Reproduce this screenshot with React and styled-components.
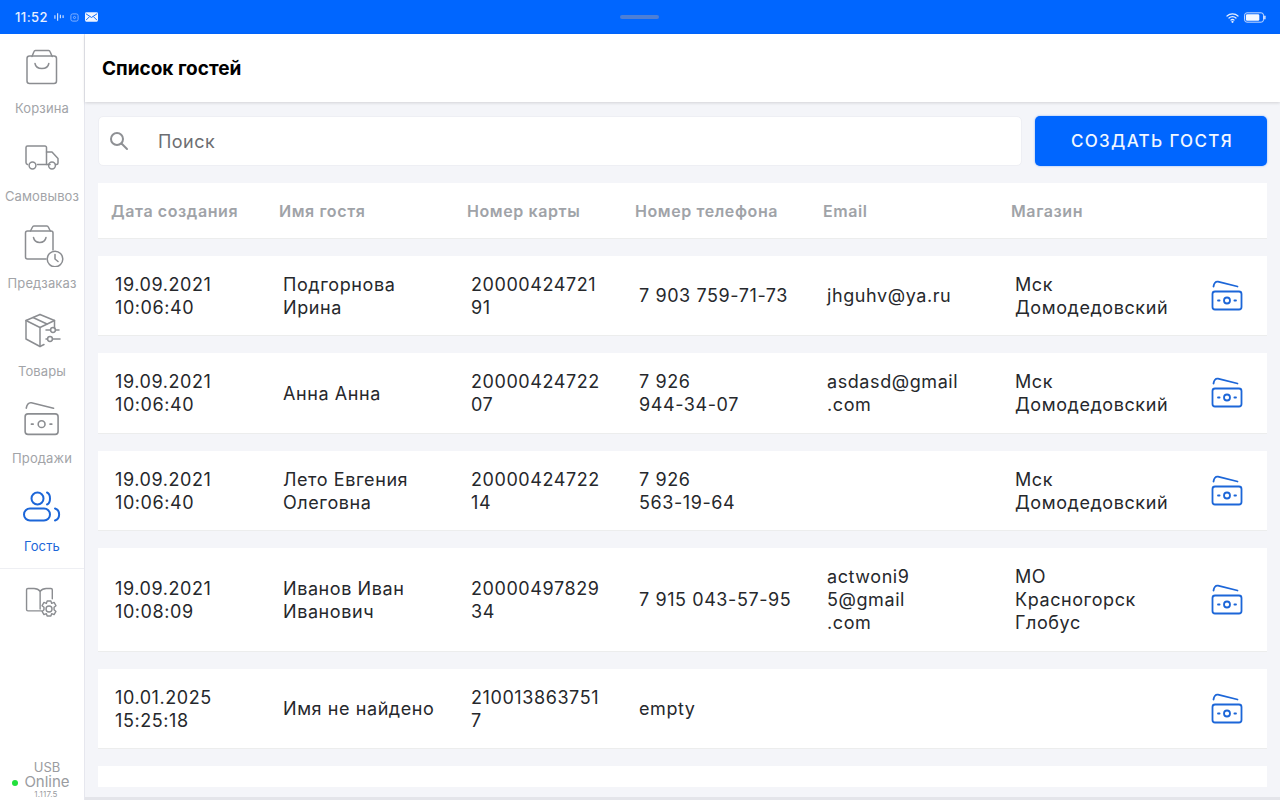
import React from 'react';
import styled, { createGlobalStyle } from 'styled-components';

const Global = createGlobalStyle`
  html, body { margin: 0; padding: 0; height: 100%; overflow: hidden; }
  body { font-family: Inter, "Noto Sans", sans-serif; background: #f4f5f9; }
  #root { height: 100%; }
  * { box-sizing: border-box; }
`;

const Page = styled.div`
  width: 1280px; height: 800px; display: flex; flex-direction: column; overflow: hidden;
`;
const StatusBar = styled.div`
  height: 34px; flex: none; background: #0066ff; color: #e8f0ff; display: grid;
  grid-template-columns: 1fr 40px 1fr; align-items: center; padding: 0 14px 0 15px;
`;
const StatusLeft = styled.div`
  display: flex; align-items: center; gap: 6px; font-size: 13px; font-weight: 500; letter-spacing: 0.45px;
`;
const StatusRight = styled.div`
  display: flex; align-items: center; justify-content: flex-end; gap: 4px;
`;
const Handle = styled.div`
  width: 39px; height: 4px; border-radius: 2px; background: #4d7fd6; margin-top: -1px; margin-left: -1px;
`;
const Body = styled.div`
  flex: 1; display: flex; min-height: 0;
`;
const Sidebar = styled.aside`
  width: 85px; flex: none; background: #fff; border-right: 1px solid #e6e7ee; display: flex; flex-direction: column;
`;
const NavItem = styled.div`
  height: 87.5px; flex: none; display: flex; flex-direction: column; align-items: center; padding-top: 14px;
  color: ${p => (p.$active ? '#1c66d8' : '#a2a4a8')};
`;
const NavIcon = styled.svg`
  width: 44px; height: 44px; flex: none; display: block;
  fill: none; stroke: ${p => (p.$active ? '#1c66d8' : '#8b8d91')}; stroke-width: ${p => p.$stroke || 1.5}; stroke-linecap: round; stroke-linejoin: round;
`;
const NavLabel = styled.div`
  font-size: 13px; line-height: 16px; margin-top: 8px; letter-spacing: 0.12px; white-space: nowrap;
`;
const Divider = styled.div`
  height: 1px; background: #eeeff3; margin-top: 9px; flex: none;
`;
const Tools = styled.div`
  display: flex; justify-content: center; padding-top: 11px;
`;
const Footer = styled.div`
  margin-top: auto; display: flex; flex-direction: column; align-items: center; color: #9a9ca0;
  padding-left: 15px;
`;
const FootUsb = styled.div`font-size: 13px; line-height: 14px; margin: -1px 0 1px -5px;`;
const FootOnline = styled.div`
  font-size: 15px; line-height: 14px; position: relative; margin-left: -5px;
`;
const Dot = styled.span`
  position: absolute; left: -12px; top: 5px; width: 6px; height: 6px; border-radius: 50%; background: #22e03c;
`;
const FootVersion = styled.div`font-size: 8px; line-height: 11px; margin-left: -7px; letter-spacing: 0.2px;`;

const Main = styled.main`
  flex: 1; min-width: 0; display: flex; flex-direction: column; background: #f4f5f9; border-bottom: 3px solid #e4e5ea;
`;
const Header = styled.header`
  height: 68px; flex: none; background: #fff; display: flex; align-items: center; padding: 0 0 0 17px;
  font-size: 19px; font-weight: 700; color: #000; box-shadow: 0 1px 3px rgba(0,0,0,.14);
`;
const Content = styled.div`
  flex: 1; min-height: 0; display: flex; flex-direction: column; padding: 14px 13px 10px 13px;
`;
const Toolbar = styled.div`
  display: flex; gap: 13px; flex: none; height: 50px;
`;
const Search = styled.div`
  flex: 1; background: #fff; border: 1px solid #eeeff4; border-radius: 5px; display: flex; align-items: center;
  padding-left: 9px; color: #6d6e72; font-size: 18px; letter-spacing: 0.45px;
`;
const SearchIcon = styled.svg`
  width: 22px; height: 22px; margin-right: 28px; fill: none; stroke: #8e9094; stroke-width: 2; stroke-linecap: round;
`;
const CreateButton = styled.button`
  width: 232px; border: none; border-radius: 5px; background: #0066ff; color: #f2f7ff; font-family: inherit;
  font-size: 17px; font-weight: 500; letter-spacing: 1.35px; padding-left: 8px; box-shadow: 0 0 2px rgba(0,102,255,.5);
`;
const TableHead = styled.div`
  margin-top: 17px; height: 56px; flex: none; background: #fff; border-bottom: 1px solid #eceded;
  display: grid; grid-template-columns: 168px 188px 168px 188px 188px 1fr; align-items: center; padding-left: 13px;
  font-size: 16px; font-weight: 600; color: #a0a3a8; letter-spacing: 0.6px;
`;
const List = styled.div`
  flex: 1; min-height: 0; overflow: hidden; display: flex; flex-direction: column; gap: 17px; margin-top: 16.5px;
`;
const Row = styled.div`
  flex: none; min-height: 80.5px; background: #fff; border-bottom: 1px solid #eceded; padding: 17.25px 0 16.25px 17px;
  display: grid; grid-template-columns: 168px 188px 168px 188px 188px 1fr 68px; align-items: center;
  font-size: 18px; line-height: 23px; color: #26282c; letter-spacing: 0.58px;
`;
const Cell = styled.div`
  white-space: nowrap;
`;
const Line = styled.div``;
const ActionIcon = styled.svg`
  width: 36px; height: 36px; display: block; margin: -2px 0 0 10px; fill: none; stroke: #1c66d8; stroke-width: 1.8;
  stroke-linecap: round; stroke-linejoin: round;
`;

const MoneyShape = () => (
  <>
    <path d="M4.500 9.500 C5 6.500 6.500 4.200 9 4.700 L28.500 9.500" />
    <rect x="3.500" y="14.500" width="29" height="18" rx="2.500" />
    <circle cx="18" cy="23.500" r="3" />
    <path d="M9 23.500h1.600M25.400 23.500H27" />
  </>
);

const rows = [
  { date: ['19.09.2021', '10:06:40'], name: ['Подгорнова', 'Ирина'], card: ['20000424721', '91'], phone: ['7 903 759-71-73'], email: ['jhguhv@ya.ru'], shop: ['Мск', 'Домодедовский'] },
  { date: ['19.09.2021', '10:06:40'], name: ['Анна Анна'], card: ['20000424722', '07'], phone: ['7 926', '944-34-07'], email: ['asdasd@gmail', '.com'], shop: ['Мск', 'Домодедовский'] },
  { date: ['19.09.2021', '10:06:40'], name: ['Лето Евгения', 'Олеговна'], card: ['20000424722', '14'], phone: ['7 926', '563-19-64'], email: [], shop: ['Мск', 'Домодедовский'] },
  { date: ['19.09.2021', '10:08:09'], name: ['Иванов Иван', 'Иванович'], card: ['20000497829', '34'], phone: ['7 915 043-57-95'], email: ['actwoni9', '5@gmail', '.com'], shop: ['МО', 'Красногорск', 'Глобус'] },
  { date: ['10.01.2025', '15:25:18'], name: ['Имя не найдено'], card: ['210013863751', '7'], phone: ['empty'], email: [], shop: [] },
];
const heads = ['Дата создания', 'Имя гостя', 'Номер карты', 'Номер телефона', 'Email', 'Магазин'];
const fields = ['date', 'name', 'card', 'phone', 'email', 'shop'];

export default function App() {
  return (
    <Page>
      <Global />
      <StatusBar>
        <StatusLeft>
          <span>11:52</span>
          <svg width="10" height="10" viewBox="0 0 11 10" fill="none" stroke="#dbe8ff" strokeWidth="1.2"><path d="M1 3v4M4 1v8M7 2.500v4M10 3v3" /></svg>
          <svg width="9" height="9" viewBox="0 0 10 10" fill="none" stroke="#8db8ff" strokeWidth="1"><rect x="1" y="1" width="8" height="8" rx="2" /><circle cx="5" cy="5" r="1.200" /></svg>
          <svg width="13" height="10" viewBox="0 0 14 10"><rect width="14" height="10" rx="1.500" fill="#eef4ff" /><path d="M1 1.500 7 5.500l6-4M1 8.500 5 4.500M13 8.500 9 4.500" fill="none" stroke="#0066ff" strokeWidth="1" /></svg>
        </StatusLeft>
        <Handle />
        <StatusRight>
          <svg width="14" height="11" viewBox="0 0 14 11" fill="none" stroke="#e8f0ff" strokeWidth="1.2" strokeLinecap="round"><path d="M1 4a8 8 0 0 1 11 0M3 6a5 5 0 0 1 7 0M5 8a2.400 2.400 0 0 1 3 0" /><circle cx="6.500" cy="9.800" r=".5" /></svg>
          <svg width="22" height="11" viewBox="0 0 23 11"><rect x=".6" y=".6" width="19.800" height="9.800" rx="2.500" fill="none" stroke="#cfe0ff" strokeWidth="1" /><rect x="2" y="2" width="14" height="7" rx="1.300" fill="#f2f7ff" /><rect x="21" y="3.500" width="1.600" height="4" rx=".8" fill="#cfe0ff" /></svg>
        </StatusRight>
      </StatusBar>
      <Body>
        <Sidebar>
          <NavItem>
            <NavIcon viewBox="0 0 44 44">
              <path d="M12 8.500 14 3.500a1.500 1.500 0 0 1 1.400-1h13.200a1.500 1.500 0 0 1 1.400 1l2.200 5" />
              <rect x="7" y="8" width="29.500" height="27.500" rx="2.500" />
              <path d="M15 15.500c1.200 6.800 12.600 6.800 13.800 0" />
            </NavIcon>
            <NavLabel>Корзина</NavLabel>
          </NavItem>
          <NavItem>
            <NavIcon viewBox="0 0 44 44">
              <path d="M7.500 28.500c-1-.2-1.500-1-1.500-2V11.500a1.500 1.500 0 0 1 1.500-1.500h17.500a1.500 1.500 0 0 1 1.500 1.500v17h-9" />
              <path d="M26.500 16h5.500l6 6.500v4.500a1.500 1.500 0 0 1-1.500 1.500h-1" />
              <path d="M26.500 28.500h3.500" />
              <circle cx="12.500" cy="29.500" r="3.400" />
              <circle cx="32" cy="29.500" r="3.400" />
            </NavIcon>
            <NavLabel>Самовывоз</NavLabel>
          </NavItem>
          <NavItem>
            <NavIcon viewBox="0 0 44 44">
              <path d="M10.500 8 12.500 4a1.500 1.500 0 0 1 1.400-1h13a1.500 1.500 0 0 1 1.400 1l2 4" />
              <path d="M26 36H7.500A2 2 0 0 1 5.500 34V10a2 2 0 0 1 2-2H31a2 2 0 0 1 2 2v17" />
              <path d="M13.500 14.500c1.200 6.500 11.300 6.500 12.500 0" />
              <circle cx="35" cy="36" r="7.800" />
              <path d="M35 31.500V36l3 2.500" />
            </NavIcon>
            <NavLabel>Предзаказ</NavLabel>
          </NavItem>
          <NavItem>
            <NavIcon viewBox="0 0 44 44">
              <path d="M20 3.500 6 9.500v18.500l14 7.500 4-2" />
              <path d="M20 3.500l14.500 6v8" />
              <path d="M6 9.500l14 7v19" />
              <path d="M20 16.500l14.500-7" />
              <path d="M13 6.500l14 6.500" />
              <path d="M26 19h4M36 19h3M26 28h1M33 28h7" />
              <circle cx="33" cy="19" r="2.400" />
              <circle cx="30" cy="28" r="2.400" />
            </NavIcon>
            <NavLabel>Товары</NavLabel>
          </NavItem>
          <NavItem>
            <NavIcon $stroke={1.4} viewBox="-1 0.5 38.700 38.700">
              <MoneyShape />
            </NavIcon>
            <NavLabel>Продажи</NavLabel>
          </NavItem>
          <NavItem $active>
            <NavIcon $active $stroke={2} viewBox="0 0 44 44">
              <circle cx="17.500" cy="12.500" r="6" />
              <path d="M27 6.500c4 1.500 4 10.500 0 12" />
              <rect x="4" y="22.500" width="26" height="12" rx="6" />
              <path d="M35 22.500c5.500 1.500 5.500 10.500 0 12" />
            </NavIcon>
            <NavLabel>Гость</NavLabel>
          </NavItem>
          <Divider />
          <Tools>
            <NavIcon viewBox="-1 -1 47 47">
              <path d="M22 32H7.500A1.500 1.500 0 0 1 6 30.500V9.500A1.500 1.500 0 0 1 7.500 8H14c2.500 0 5 1 6.500 3V30" />
              <path d="M20.500 11c1.500-2 4-3 6.500-3h5a1.500 1.500 0 0 1 1.500 1.500V19" />
              <circle cx="30" cy="30" r="3.200" />
              <path d="M28 21.500h4l.8 2.500 2.600-1 2 3.400-2 1.800v2.600l2 1.800-2 3.400-2.600-1-.8 2.500h-4l-.8-2.500-2.600 1-2-3.400 2-1.800v-2.600l-2-1.800 2-3.400 2.600 1z" />
            </NavIcon>
          </Tools>
          <Footer>
            <FootUsb>USB</FootUsb>
            <FootOnline><Dot />Online</FootOnline>
            <FootVersion>1.117.5</FootVersion>
          </Footer>
        </Sidebar>
        <Main>
          <Header>Список гостей</Header>
          <Content>
            <Toolbar>
              <Search>
                <SearchIcon viewBox="0 0 22 22"><circle cx="9" cy="9" r="6" /><path d="M13.500 13.500 19 19" /></SearchIcon>
                Поиск
              </Search>
              <CreateButton>СОЗДАТЬ ГОСТЯ</CreateButton>
            </Toolbar>
            <TableHead>
              {heads.map(h => <div key={h}>{h}</div>)}
            </TableHead>
            <List>
              {rows.map((r, i) => (
                <Row key={i}>
                  {fields.map(f => (
                    <Cell key={f}>{r[f].map((l, j) => <Line key={j}>{l}</Line>)}</Cell>
                  ))}
                  <ActionIcon viewBox="0 0 36 36"><MoneyShape /></ActionIcon>
                </Row>
              ))}
              <Row />
            </List>
          </Content>
        </Main>
      </Body>
    </Page>
  );
}
